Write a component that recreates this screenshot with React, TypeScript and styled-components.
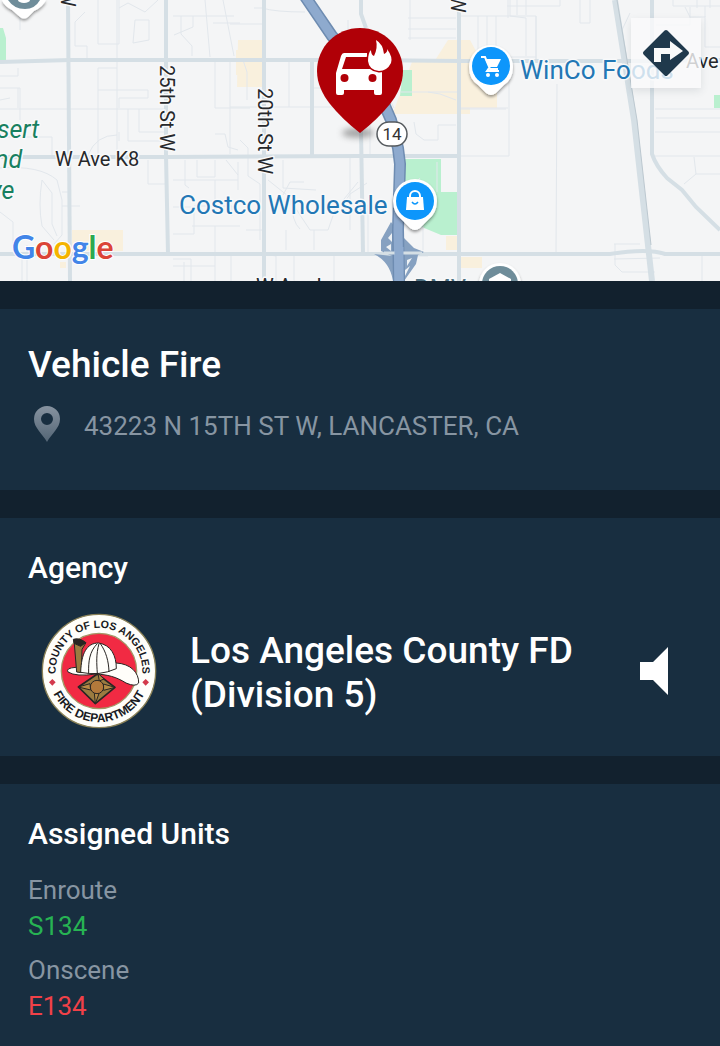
import styled, { createGlobalStyle } from 'styled-components';

const colorPage = '#12212e';
const colorPanel = '#182e40';
const colorText = '#ffffff';
const colorMuted = '#8795a2';
const colorEnroute = '#27b353';
const colorOnscene = '#f04148';
const fontFamily = "Roboto, 'Liberation Sans', sans-serif";

const GlobalStyle = createGlobalStyle`
  body {
    margin: 0;
    background: ${colorPage};
    color: ${colorText};
    font-family: ${fontFamily};
  }
`;

const Page = styled.main`
  display: flex;
  flex-direction: column;
  gap: 28px;
  min-height: 100vh;
`;

const MapArea = styled.section`
  position: relative;
  height: 281px;
  overflow: hidden;
  background: #f4f5f6;
`;

const MapCanvas = styled.svg`
  display: block;
  width: 100%;
  height: 100%;
`;

const DirectionsButton = styled.button`
  position: absolute;
  top: 18px;
  right: 19px;
  display: flex;
  align-items: center;
  justify-content: center;
  width: 70px;
  height: 70px;
  padding: 0;
  border: 0;
  background: rgba(250, 250, 251, 0.8);
  box-shadow: 0 3px 8px rgba(60, 70, 80, 0.12);
  cursor: pointer;
`;

const Panel = styled.section<{ $fill?: boolean }>`
  box-sizing: border-box;
  padding: 30px 28px 26px;
  background: ${colorPanel};
  flex: ${({ $fill }) => ($fill ? '1 0 auto' : '0 0 auto')};
`;

const IncidentTitle = styled.h1`
  margin: 0;
  padding-top: 2px;
  font-size: 37px;
  font-weight: 500;
  line-height: 48px;
`;

const AddressRow = styled.div`
  display: flex;
  align-items: center;
  gap: 20px;
  min-height: 40px;
  padding: 17px 0 18px;
`;

const Address = styled.address`
  color: ${colorMuted};
  font-size: 26px;
  font-style: normal;
  line-height: 40px;
`;

const SectionTitle = styled.h2`
  margin: 0;
  font-size: 30px;
  font-weight: 500;
  line-height: 40px;
`;

const AgencyRow = styled.div`
  display: flex;
  align-items: center;
  padding: 24px 18px 0 12px;
`;

const AgencyName = styled.p`
  flex: 1;
  margin: 0;
  padding: 4px 32px 0;
  font-size: 37px;
  font-weight: 500;
  line-height: 44px;
`;

const ListenButton = styled.button`
  display: flex;
  align-items: center;
  justify-content: center;
  width: 40px;
  height: 56px;
  padding: 0;
  border: 0;
  background: transparent;
  cursor: pointer;
`;

const UnitList = styled.dl`
  margin: 0;
  padding-top: 18px;
`;

const UnitGroup = styled.div`
  padding-bottom: 8px;
  font-size: 26px;
  line-height: 36px;
`;

const UnitStatus = styled.dt`
  color: ${colorMuted};
`;

const UnitName = styled.dd<{ $color: string }>`
  margin: 0;
  color: ${({ $color }) => $color};
`;

const units = [
  { status: 'Enroute', name: 'S134', color: colorEnroute },
  { status: 'Onscene', name: 'E134', color: colorOnscene },
];

const minorRoads = [
  'M0 109H88M88 109H168M117 0V155M98 155V68H117M98 90H148V98H119V108M128 109V141H167M139 109V132H167M119 132V141M88 155Q96 135 117 135',
  'M75 46V22L85 12M75 46H87V58M98 0V44H119M133 43L135 20H149V40L133 43M119 0V44M119 8L128 3L145 12L158 0',
  'M173 16H234M181 16V34L192 46V56M193 16V27L174 35M205 0L210 57M223 0L234 56M213 23H240',
  'M0 76H18V68M0 88H20V120M0 100L10 98M0 137H52V155M18 88V108M0 168Q40 165 57 180L62 200V235L54 244M42 180L52 193V224L57 236M42 180Q38 205 42 226L54 240M62 206H80M62 192H70M0 212L13 222V250',
  'M148 160V184H167M173 180H238M185 160V185L189 188M197 160V177H215V160M226 160L238 175M215 180V206M173 207H194V234H173M194 206H232V216M192 226H240M173 259H191V281M173 266H215M215 226V281M20 0V30M22 258V281',
  'M215 60V108H250M215 134H225L228 147L238 150M254 8H262Q275 12 305 12M230 24H265M289 60V107M230 107H350M230 60V154M243 60L247 72V100M313 70V154M313 88H328',
  'M240 140L248 148V176L260 184V240M268 180L288 196L300 215L310 230H328L335 210L358 182M314 230V250M283 195L290 182H304M283 160V188L316 190M238 162V190M246 230H264M286 230V250M291 200Q292 222 300 229M346 200L350 194L367 183',
  'M408 18H456M408 29H456M408 38H456M410 0V40M428 92L440 94L456 100M414 122L416 134L424 140H438V125H456M370 110V154M401 92H460M386 92L394 108M395 182L410 190L420 178M392 256H428M258 253L276 256V281M334 254V281M294 254V281',
  'M478 16V56M487 16V56M496 16V56M510 0V16L526 18V56M536 16V60M508 57H536M461 16H536V60M509 60V156M461 108H508M461 156H509M557 84L556 252M507 6H560V0M508 0V18M517 0V15M526 0V15M580 0V23H590V0M460 109H506',
  'M655 109H720M655 132H720M655 156H720M656 118H720M694 157L696 174H720M696 174L684 184M673 0V6H720M685 7L690 17H705V6M705 16V47H720M656 25H690V7M622 30L630 13M615 244V265L622 272H655M614 244H640M614 259L660 258M702 255V281M697 0V8M710 0V8',
  'M231 281V256M184 262V281M27 245V281M350 154V230M368 205V253M423 195V250M437 162V192M348 20V50',
];

const majorRoads = [
  'M68 0L70 281', 'M166 0V155L168 254', 'M264 0V278', 'M0 62L70 60H360L460 61H650L720 60',
  'M0 157H168L360 156H459', 'M0 254H610Q648 248 665 254H720', 'M459 0V281', 'M312 60V156',
  'M361 130L363 254', 'M361 0V14L366 28', 'M652 0V154Q656 166 667 178L682 190L696 207L720 230',
];

const freeway = 'M302 -8L332 36L378 90L391 120L398 148L400 164L398 230L399 281';

const IncidentMap = () => (
  <MapCanvas viewBox="0 0 720 281" preserveAspectRatio="xMidYMid slice" role="img" aria-label="Incident map">
    <defs>
      <filter id="pinShadow" x="-30%" y="-30%" width="160%" height="160%">
        <feDropShadow dx="0" dy="2" stdDeviation="1.5" floodOpacity="0.4" />
      </filter>
      <filter id="groundShadow" x="-50%" y="-100%" width="200%" height="300%">
        <feGaussianBlur stdDeviation="3" />
      </filter>
    </defs>
    <rect width="720" height="281" fill="#f4f5f6" />
    <g fill="#f9f0dd">
      <path d="M72 230H123V251H72ZM60 262H66V268H60ZM238 40H262V87H237ZM236 50H240V75H236Z" />
      <path d="M394 110L412 62H434L448 40H470L497 90V108H470V114H386ZM446 236H459V250H446ZM461 257H482V268H461Z" />
    </g>
    <g fill="#b9f0cf">
      <path d="M0 28H3L6 38V60H0ZM403 70H412V96H400ZM405 159H441V192H458V235H441L405 220ZM714 95H720V108H714Z" />
    </g>
    <g fill="none" stroke="#e2e7ec" strokeWidth="1">
      {minorRoads.map((d) => <path key={d} d={d} />)}
    </g>
    <g fill="none" stroke="#d5dfe5" strokeWidth="4">
      {majorRoads.map((d) => <path key={d} d={d} />)}
    </g>
    <g fill="none">
      <path d="M615 0L634 120L652 281" stroke="#d5dfe5" strokeWidth="6" />
      <path d="M617 0L637 120L651 245" stroke="#bcc8d0" strokeWidth="1" />
    </g>
    <path
      d="M391 222L381 240V251L392 256L374 254Q390 262 393 281H404L416 264L418 255L424 252L414 248L404 238L394 226Z"
      fill="#86a1c1"
    />
    <path d="M388 238L392 233V242ZM386 247L391 244V251ZM407 260L412 258L407 266ZM405 270L410 266L405 276Z" fill="#eef2f5" />
    <path d={freeway} fill="none" stroke="#6e8cb1" strokeWidth="12" />
    <path d={freeway} fill="none" stroke="#8eaace" strokeWidth="9" />
    <path d="M384 253H422" stroke="#d5dfe5" strokeWidth="3" />
    <path d="M399 247V281" stroke="#8eaace" strokeWidth="9" />

    <g
      fontFamily={fontFamily}
      fontSize="20"
      fill="#26282b"
      stroke="#f8f9fa"
      strokeWidth="3"
      strokeLinejoin="round"
      paintOrder="stroke"
    >
      <text x="55" y="166">W Ave K8</text>
      <text transform="translate(160 65) rotate(90)">25th St W</text>
      <text transform="translate(258 88) rotate(90)">20th St W</text>
      <text transform="translate(61 -11) rotate(90)">W</text>
      <text transform="translate(451 -5) rotate(90)">W</text>
      <text x="686" y="68">Ave</text>
      <text x="256" y="293">W Ave L</text>
      <text x="414" y="296" fontSize="24" fill="#4d7080">DMV</text>
      <g fill="#188060" fontStyle="italic" fontSize="25">
        <text x="-3" y="138">sert</text>
        <text x="-5" y="168">nd</text>
        <text x="-10" y="199">ve</text>
      </g>
      <g fill="#2277b5" fontSize="26">
        <text x="179" y="214">Costco Wholesale</text>
        <text x="520" y="79">WinCo Foods</text>
      </g>
    </g>

    <path d="M0 0H46Q43 7 34 11L28 17Q24 20 20 17L12 10Q4 6 2 0Z" fill="#fff" filter="url(#pinShadow)" />
    <path d="M8 0H40Q35 9 25 9Q14 9 8 0Z" fill="#6f8d9a" />
    <ellipse cx="24" cy="0" rx="6" ry="3" fill="#fff" />

    <g filter="url(#pinShadow)">
      <path d="M491 45A22 22 0 0 1 513 67Q513 79 504 85L496 93Q491 97 486 93L478 85Q469 79 469 67A22 22 0 0 1 491 45Z" fill="#fff" />
      <circle cx="491" cy="66" r="19" fill="#0a96fb" />
    </g>
    <path d="M481 57H485L490 69H498" fill="none" stroke="#fff" strokeWidth="2" />
    <path d="M485 59H501L497 67H489Z" fill="#fff" />
    <path d="M489 68L487 71H499" fill="none" stroke="#fff" strokeWidth="2" />
    <circle cx="488" cy="75" r="2" fill="#fff" />
    <circle cx="497" cy="75" r="2" fill="#fff" />

    <g filter="url(#pinShadow)">
      <path d="M415 179A22 22 0 0 1 437 201Q437 213 428 220L420 228Q415 232 410 228L402 220Q393 213 393 201A22 22 0 0 1 415 179Z" fill="#fff" />
      <circle cx="415" cy="201" r="19" fill="#0a96fb" />
    </g>
    <path d="M407 197H423L424 210H406Z" fill="#fff" />
    <path d="M410 198V196A5 5 0 0 1 420 196V198" fill="none" stroke="#fff" strokeWidth="2" />
    <path d="M412 202Q415 206 418 202" fill="none" stroke="#0a96fb" strokeWidth="1.5" />

    <circle cx="500" cy="284" r="21" fill="#fff" filter="url(#pinShadow)" />
    <circle cx="500" cy="284" r="18" fill="#6f8d9a" />
    <path d="M489 279L500 273L511 279V284H489Z" fill="#fff" />

    <ellipse cx="358" cy="133" rx="16" ry="5" fill="#555" opacity="0.5" filter="url(#groundShadow)" />
    <path
      d="M360 28C336 28 317 47 317 71C317 84 323 95 330 104Q342 119 360 133Q378 119 390 104C397 95 403 84 403 71C403 47 384 28 360 28Z"
      fill="#b00007"
    />
    <path
      fill="#fff"
      fillRule="evenodd"
      d="M344 53H367V57H346L342 69H369L382 68V93Q382 95 380 95H376Q374 95 374 93V90H344V93Q344 95 342 95H338Q336 95 336 93V73L341 56Q342 53 344 53Z"
    />
    <circle cx="344.500" cy="78" r="4" fill="#b00007" />
    <circle cx="372.500" cy="78" r="4" fill="#b00007" />
    <path
      d="M376 40Q383 44 384 54Q388 52 387 49Q393 57 391 63Q387 71 379 71Q369 70 368 61Q368 53 371 50Q371 55 374 56Q378 48 376 40Z"
      fill="#fff"
      stroke="#b00007"
      strokeWidth="3"
      paintOrder="stroke"
    />

    <rect x="377" y="122" width="30" height="24" rx="12" fill="#fff" stroke="#555a5e" strokeWidth="1.500" />
    <text x="392" y="140" textAnchor="middle" fontFamily={fontFamily} fontSize="17" fill="#333">14</text>

    <text
      x="12"
      y="259"
      fontFamily="Lato, sans-serif"
      fontSize="32"
      fontWeight="700"
      stroke="#fff"
      strokeWidth="2"
      paintOrder="stroke"
      aria-label="Google"
    >
      <tspan fill="#4285e8">G</tspan>
      <tspan fill="#db4437">o</tspan>
      <tspan fill="#f4b400">o</tspan>
      <tspan fill="#4285e8">g</tspan>
      <tspan fill="#2da94f">l</tspan>
      <tspan fill="#db4437">e</tspan>
    </text>
  </MapCanvas>
);

const DirectionsIcon = () => (
  <svg width="48" height="48" viewBox="0 0 48 48" aria-hidden="true">
    <path d="M24 3L45 24L24 45L3 24Z" fill="#20394c" stroke="#20394c" strokeWidth="4" strokeLinejoin="round" />
    <path d="M12 33V19H28V12L41 22L28 31V25H19V33Z" fill="#fafafa" />
  </svg>
);

const LocationIcon = () => (
  <svg width="36" height="40" viewBox="0 0 36 40" aria-hidden="true">
    <defs>
      <linearGradient id="locationFill" x1="0" y1="0" x2="0" y2="1">
        <stop offset="0" stopColor="#8793a0" />
        <stop offset="1" stopColor="#536575" />
      </linearGradient>
    </defs>
    <path
      fill="url(#locationFill)"
      fillRule="evenodd"
      d="M19 0A13 13 0 0 0 6 13C6 22 14 27 19 36C24 27 32 22 32 13A13 13 0 0 0 19 0ZM19 7A6 6 0 1 1 19 19A6 6 0 0 1 19 7Z"
    />
  </svg>
);

const SpeakerIcon = () => (
  <svg width="28" height="48" viewBox="0 0 28 48" aria-hidden="true">
    <path d="M0 15H13L28 0V48L13 33H0Z" fill="#fff" />
  </svg>
);

const AgencySeal = () => (
  <svg width="118" height="118" viewBox="0 0 354 354" role="img" aria-label="County of Los Angeles Fire Department">
    <defs>
      <path id="sealTop" d="M49 200A130 130 0 1 1 305 200" />
      <path id="sealBottom" d="M24 177A153 153 0 0 0 330 177" />
    </defs>
    <circle cx="177" cy="177" r="170" fill="#fffefa" stroke="#8a8157" strokeWidth="4" />
    <circle cx="177" cy="177" r="113" fill="#f12a43" stroke="#a39867" strokeWidth="4" />
    <g fontFamily="'Liberation Sans', sans-serif" fontWeight="700" fill="#181a22" textAnchor="middle">
      <text fontSize="32"><textPath href="#sealTop" startOffset="50%">COUNTY OF LOS ANGELES</textPath></text>
      <text fontSize="36"><textPath href="#sealBottom" startOffset="50%">FIRE DEPARTMENT</textPath></text>
    </g>
    <path d="M37 201L47 211L37 221L27 211ZM317 201L327 211L317 221L307 211Z" fill="#d3394b" />
    <g stroke="#282522" strokeWidth="3" strokeLinejoin="round">
      <path d="M84 180Q76 168 108 166L228 153C272 155 297 182 296 213Q287 226 258 213C228 194 202 188 168 186Q108 195 84 180Z" fill="#fffefa" />
      <path d="M102 84Q118 78 138 92L126 112L124 182L110 180Z" fill="#9a7b40" />
      <path d="M100 82Q118 76 137 92L122 103L102 94Z" fill="#282522" />
      <path d="M122 181C124 125 139 93 176 93C213 99 229 130 229 170Q178 193 122 181Z" fill="#fffefa" />
      <path d="M172 95C148 119 145 149 146 183M177 95C168 127 170 155 172 184M181 95C198 119 206 147 207 180" fill="none" />
      <path d="M172 186L225 226L166 275L115 225Z" fill="#9a7b40" strokeWidth="5" />
      <path d="M174 184L178 207L192 201ZM115 225L150 215L152 234ZM225 226L191 235L190 216ZM166 275L163 243L179 239Z" fill="#b58a45" />
      <circle cx="171" cy="225" r="20" fill="#b3793b" />
    </g>
  </svg>
);

const App = () => (
  <>
    <GlobalStyle />
    <Page>
      <MapArea>
        <IncidentMap />
        <DirectionsButton type="button" aria-label="Directions">
          <DirectionsIcon />
        </DirectionsButton>
      </MapArea>

      <Panel>
        <IncidentTitle>Vehicle Fire</IncidentTitle>
        <AddressRow>
          <LocationIcon />
          <Address>43223 N 15TH ST W, LANCASTER, CA</Address>
        </AddressRow>
      </Panel>

      <Panel>
        <SectionTitle>Agency</SectionTitle>
        <AgencyRow>
          <AgencySeal />
          <AgencyName>Los Angeles County FD (Division 5)</AgencyName>
          <ListenButton type="button" aria-label="Listen">
            <SpeakerIcon />
          </ListenButton>
        </AgencyRow>
      </Panel>

      <Panel $fill>
        <SectionTitle>Assigned Units</SectionTitle>
        <UnitList>
          {units.map(({ status, name, color }) => (
            <UnitGroup key={name}>
              <UnitStatus>{status}</UnitStatus>
              <UnitName $color={color}>{name}</UnitName>
            </UnitGroup>
          ))}
        </UnitList>
      </Panel>
    </Page>
  </>
);

export default App;
